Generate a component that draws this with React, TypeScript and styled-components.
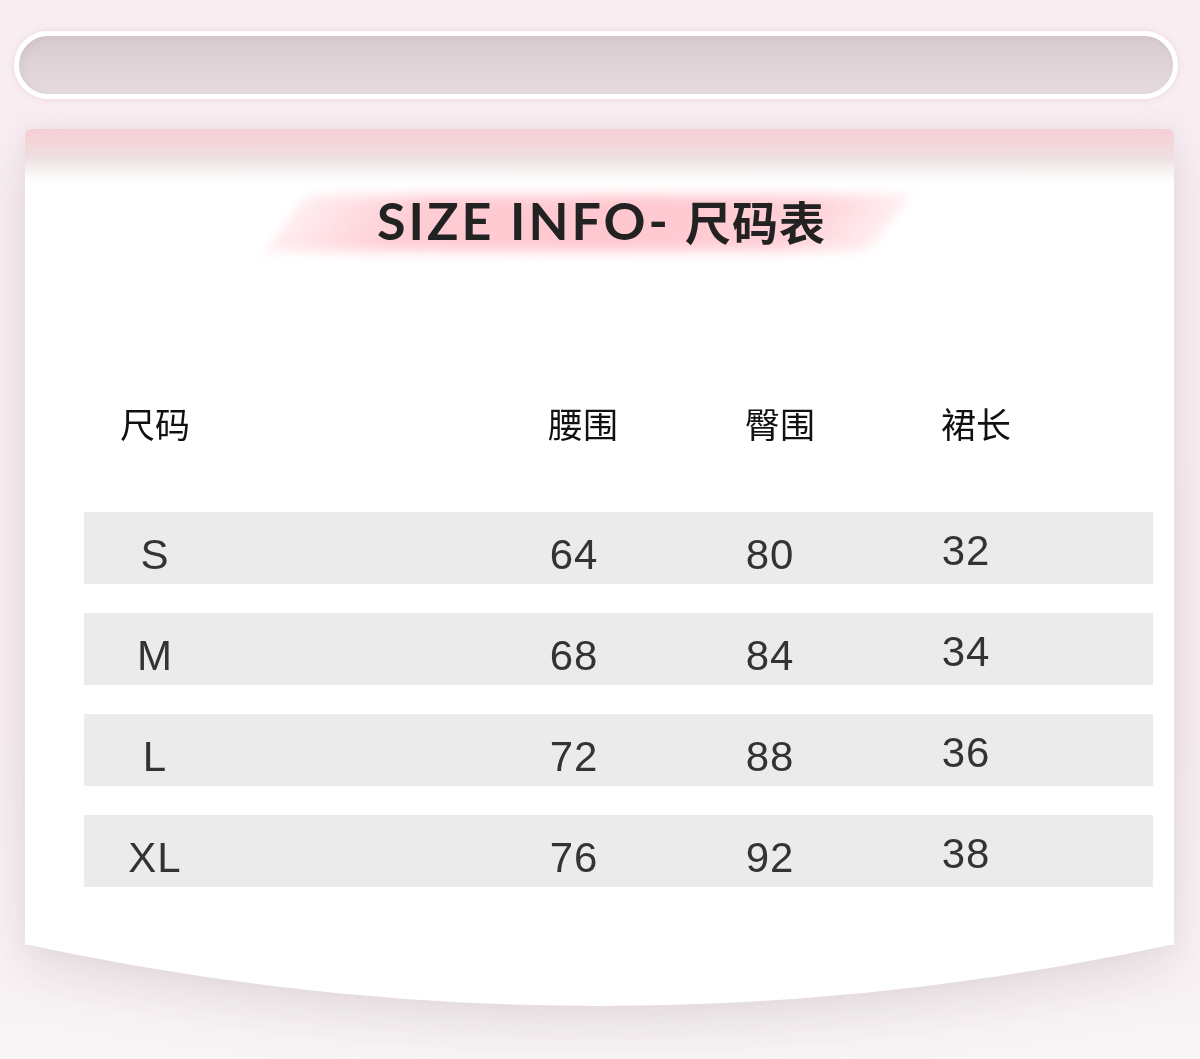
import React from 'react';
import styled, { createGlobalStyle } from 'styled-components';

const GlobalStyle = createGlobalStyle`
	html, body {
		margin: 0;
		padding: 0;
		background: #f8eef2;
	}
`;

const sizes = [
	{ size: 'S', waist: 64, hip: 80, length: 32 },
	{ size: 'M', waist: 68, hip: 84, length: 34 },
	{ size: 'L', waist: 72, hip: 88, length: 36 },
	{ size: 'XL', waist: 76, hip: 92, length: 38 },
];

const headers = ['尺码', '腰围', '臀围', '裙长'];

const App: React.FC = () => {
	return (
		<Page>
			<GlobalStyle />
			<Pill />
			<CardWrap>
				<Card>
					<TitleBox>
						<Highlight />
						<Title>
							<Latin>SIZE INFO-</Latin>
							<Cjk>尺码表</Cjk>
						</Title>
					</TitleBox>
					<Table>
						<HeaderRow>
							{headers.map((h, i) => (
								<HeaderCell key={h} $first={i === 0}>
									{h}
								</HeaderCell>
							))}
						</HeaderRow>
						<Rows>
							{sizes.map((row) => (
								<Row key={row.size}>
									<Cell $first>{row.size}</Cell>
									<Cell>{row.waist}</Cell>
									<Cell>{row.hip}</Cell>
									<Cell $shift={-8}>{row.length}</Cell>
								</Row>
							))}
						</Rows>
					</Table>
				</Card>
				<CardBottom />
			</CardWrap>
		</Page>
	);
};

const Page = styled.div`
	width: 1200px;
	height: 1059px;
	overflow: hidden;
	display: flex;
	flex-direction: column;
	background: linear-gradient(180deg, #f8eef2 0%, #f7edf0 70%, #f9f4f5 100%);
`;

const Pill = styled.div`
	box-sizing: border-box;
	margin: 31px 0 0 14px;
	width: 1164px;
	height: 68px;
	border: 5px solid #ffffff;
	border-radius: 40px;
	background: linear-gradient(180deg, #d8cbd1 0%, #ddd2d7 45%, #e5dbdf 100%);
	box-shadow: 0 0 6px rgba(232, 200, 212, 0.7),
		inset 3px 2px 6px rgba(150, 120, 135, 0.12);
`;

const CardWrap = styled.div`
	margin: 30px 0 0 25px;
	width: 1149px;
	display: flex;
	flex-direction: column;
	filter: drop-shadow(0 24px 24px rgba(120, 112, 115, 0.13))
		drop-shadow(0 0 12px rgba(200, 180, 188, 0.22));
`;

const Card = styled.div`
	box-sizing: border-box;
	height: 816px;
	padding-top: 58px;
	border-radius: 6px 6px 0 0;
	background: linear-gradient(180deg, #f6cfd5 0px, #f3d6da 14px, #eee0e2 30px, #fbf8f8 46px, #ffffff 56px);
	display: flex;
	flex-direction: column;
	align-items: center;
`;

const CardBottom = styled.div`
	height: 62px;
	margin-top: -1px;
	background: #ffffff;
	clip-path: circle(2693px at 50% -2631px);
`;

const TitleBox = styled.div`
	position: relative;
	height: 66px;
	width: 652px;
	display: flex;
	align-items: center;
	justify-content: center;
`;

const Highlight = styled.div`
	position: absolute;
	left: 12px;
	right: 36px;
	top: 8px;
	bottom: 2px;
	transform: skewX(-36deg);
	background: linear-gradient(
		90deg,
		rgba(255, 205, 212, 0.35) 0%,
		rgba(255, 196, 205, 0.85) 20%,
		#ffc7cf 55%,
		rgba(255, 196, 205, 0.8) 85%,
		rgba(255, 210, 216, 0.35) 100%
	);
	filter: blur(6px);
`;

const Title = styled.h1`
	position: relative;
	margin: 0 0 0 4px;
	display: flex;
	align-items: baseline;
	gap: 14px;
	color: #222222;
	letter-spacing: 3px;
	line-height: 1;
`;

const Latin = styled.span`
	font-family: Lato, 'Open Sans', sans-serif;
	font-weight: 700;
	font-size: 52px;
`;

const Cjk = styled.span`
	font-family: 'Noto Sans CJK SC', sans-serif;
	font-weight: 700;
	font-size: 46px;
	letter-spacing: 1px;
`;

const Table = styled.div`
	align-self: flex-start;
	margin: 144px 0 0 59px;
	width: 1069px;
	display: flex;
	flex-direction: column;
`;

const HeaderRow = styled.div`
	display: grid;
	grid-template-columns: 400px 198px 196px 196px;
	height: 50px;
	align-items: center;
`;

const HeaderCell = styled.div<{ $first?: boolean }>`
	justify-self: ${(p) => (p.$first ? 'start' : 'stretch')};
	width: ${(p) => (p.$first ? '142px' : 'auto')};
	text-align: center;
	font-family: 'Noto Sans CJK SC', sans-serif;
	font-size: 35px;
	color: #111111;
	line-height: 1;
`;

const Rows = styled.div`
	margin-top: 65px;
	display: flex;
	flex-direction: column;
	gap: 29px;
`;

const Row = styled.div`
	display: grid;
	grid-template-columns: 392px 196px 196px 196px;
	height: 72px;
	align-items: center;
	background: #ebebeb;
`;

const Cell = styled.div<{ $first?: boolean; $shift?: number }>`
	justify-self: ${(p) => (p.$first ? 'start' : 'stretch')};
	width: ${(p) => (p.$first ? '142px' : 'auto')};
	text-align: center;
	font-family: 'Liberation Sans', Arial, sans-serif;
	font-size: 42px;
	letter-spacing: 1px;
	color: #333333;
	line-height: 1;
	padding-top: ${(p) => 14 + (p.$shift || 0)}px;
`;

export default App;
